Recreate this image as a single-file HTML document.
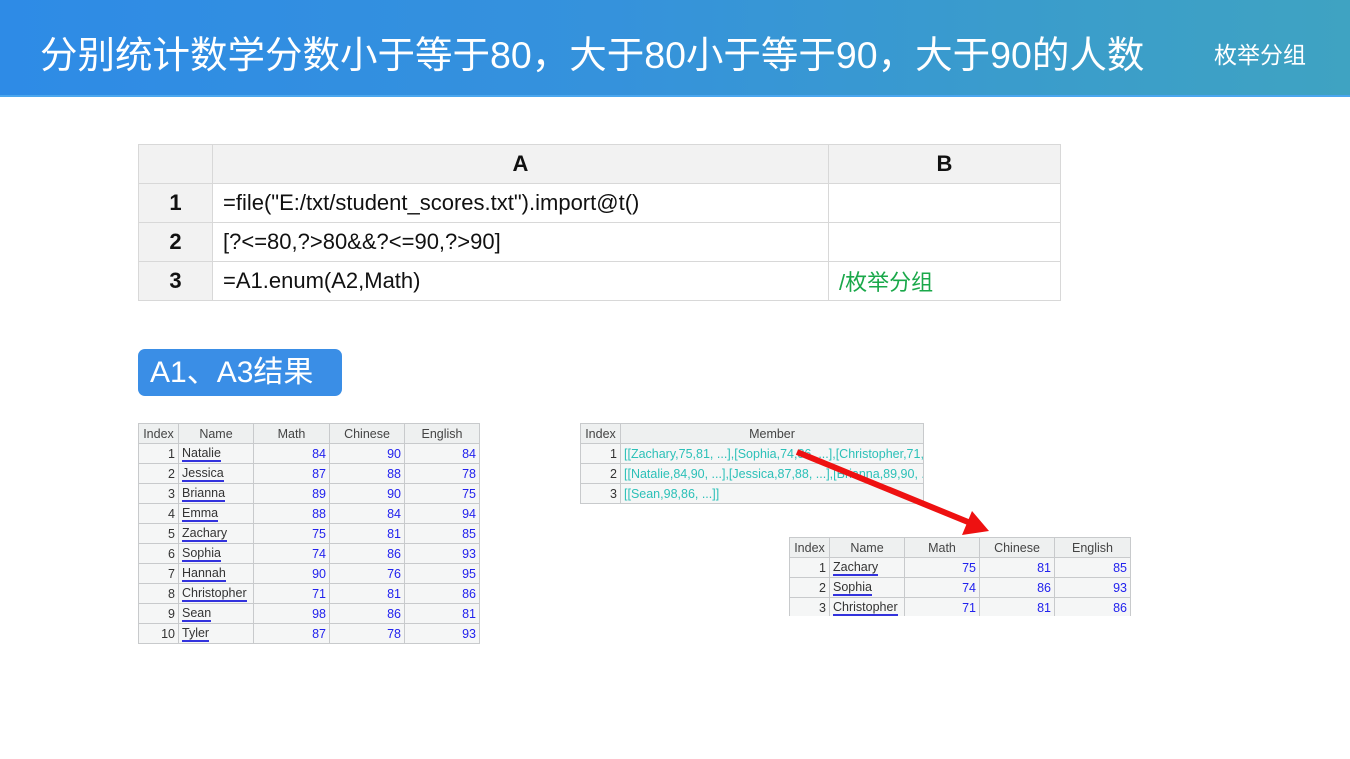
<!DOCTYPE html>
<html><head><meta charset="utf-8"><style>
*{margin:0;padding:0;box-sizing:border-box}
body{width:1350px;height:759px;background:#fff;position:relative;overflow:hidden;font-family:"Liberation Sans","Noto Sans CJK SC",sans-serif}
.hdr{position:absolute;left:0;top:0;width:1350px;height:97px;background:linear-gradient(90deg,#2e8be6 0%,#3592dc 45%,#3a9ccc 75%,#3fa3c2 100%);border-bottom:2px solid #4aa6ee}
.hdr .t{position:absolute;left:40px;top:24px;color:#fff;font-size:37.5px;white-space:nowrap}
.hdr .r{position:absolute;left:1214px;top:36px;color:#fff;font-size:23px}
table{border-collapse:collapse;position:absolute}
.code td{border:1px solid #d8d8d8;height:39px;font-size:22px;color:#111;padding-left:10px}
.code .h td{background:#f2f2f2;font-weight:bold;text-align:center;padding:0}
.code td.n{background:#f2f2f2;font-weight:bold;text-align:center;padding:0}
.badge{position:absolute;left:138px;top:349px;width:204px;height:47px;background:#3a8ee6;border-radius:7px;color:#fff;font-size:30px;line-height:47px;padding-left:12px}
.g td{border:1px solid #c8cacc;height:20px;font-size:12.5px;background:#f5f6f6;color:#333;padding:0 3px;white-space:nowrap;overflow:hidden}
.g .h td{text-align:center;color:#444;background:#eef0f0}
.g td.i{text-align:right}
.g td.v{text-align:right;color:#2222ee}
.g td.nm span{border-bottom:2px solid #3333dd;line-height:14px;display:inline-block}
.g td.m{color:#2cc0b8}
.clip{position:absolute;left:789px;top:537px;width:343px;height:79px;overflow:hidden}
</style></head><body>
<div class="hdr"><div class="t">分别统计数学分数小于等于80，大于80小于等于90，大于90的人数</div><div class="r">枚举分组</div></div>

<table class="code" style="left:138px;top:144px;width:923px">
<tr class="h"><td style="width:74px"></td><td style="width:616px">A</td><td>B</td></tr>
<tr><td class="n">1</td><td>=file("E:/txt/student_scores.txt").import@t()</td><td></td></tr>
<tr><td class="n">2</td><td>[?&lt;=80,?&gt;80&amp;&amp;?&lt;=90,?&gt;90]</td><td></td></tr>
<tr><td class="n">3</td><td>=A1.enum(A2,Math)</td><td style="color:#1aa84a">/枚举分组</td></tr>
</table>

<div class="badge">A1、A3结果</div>

<table class="g" style="left:138px;top:423px;width:342px">
<tr class="h"><td style="width:40px">Index</td><td style="width:75px">Name</td><td style="width:76px">Math</td><td style="width:75px">Chinese</td><td>English</td></tr>
<tr><td class="i">1</td><td class="nm"><span>Natalie</span></td><td class="v">84</td><td class="v">90</td><td class="v">84</td></tr>
<tr><td class="i">2</td><td class="nm"><span>Jessica</span></td><td class="v">87</td><td class="v">88</td><td class="v">78</td></tr>
<tr><td class="i">3</td><td class="nm"><span>Brianna</span></td><td class="v">89</td><td class="v">90</td><td class="v">75</td></tr>
<tr><td class="i">4</td><td class="nm"><span>Emma</span></td><td class="v">88</td><td class="v">84</td><td class="v">94</td></tr>
<tr><td class="i">5</td><td class="nm"><span>Zachary</span></td><td class="v">75</td><td class="v">81</td><td class="v">85</td></tr>
<tr><td class="i">6</td><td class="nm"><span>Sophia</span></td><td class="v">74</td><td class="v">86</td><td class="v">93</td></tr>
<tr><td class="i">7</td><td class="nm"><span>Hannah</span></td><td class="v">90</td><td class="v">76</td><td class="v">95</td></tr>
<tr><td class="i">8</td><td class="nm"><span>Christopher</span></td><td class="v">71</td><td class="v">81</td><td class="v">86</td></tr>
<tr><td class="i">9</td><td class="nm"><span>Sean</span></td><td class="v">98</td><td class="v">86</td><td class="v">81</td></tr>
<tr><td class="i">10</td><td class="nm"><span>Tyler</span></td><td class="v">87</td><td class="v">78</td><td class="v">93</td></tr>
</table>

<table class="g" style="left:580px;top:423px;width:344px;table-layout:fixed">
<tr class="h"><td style="width:40px">Index</td><td>Member</td></tr>
<tr><td class="i">1</td><td class="m">[[Zachary,75,81, ...],[Sophia,74,86, ...],[Christopher,71,...</td></tr>
<tr><td class="i">2</td><td class="m">[[Natalie,84,90, ...],[Jessica,87,88, ...],[Brianna,89,90, ....</td></tr>
<tr><td class="i">3</td><td class="m">[[Sean,98,86, ...]]</td></tr>
</table>

<div class="clip">
<table class="g" style="left:0;top:0;width:342px">
<tr class="h"><td style="width:40px">Index</td><td style="width:75px">Name</td><td style="width:75px">Math</td><td style="width:75px">Chinese</td><td>English</td></tr>
<tr><td class="i">1</td><td class="nm"><span>Zachary</span></td><td class="v">75</td><td class="v">81</td><td class="v">85</td></tr>
<tr><td class="i">2</td><td class="nm"><span>Sophia</span></td><td class="v">74</td><td class="v">86</td><td class="v">93</td></tr>
<tr><td class="i">3</td><td class="nm"><span>Christopher</span></td><td class="v">71</td><td class="v">81</td><td class="v">86</td></tr>
</table>
</div>

<svg style="position:absolute;left:0;top:0" width="1350" height="759">
<line x1="797" y1="452" x2="968" y2="522" stroke="#ee1111" stroke-width="6"/>
<polygon points="989,531 962,535 972,511" fill="#ee1111"/>
</svg>
</body></html>
